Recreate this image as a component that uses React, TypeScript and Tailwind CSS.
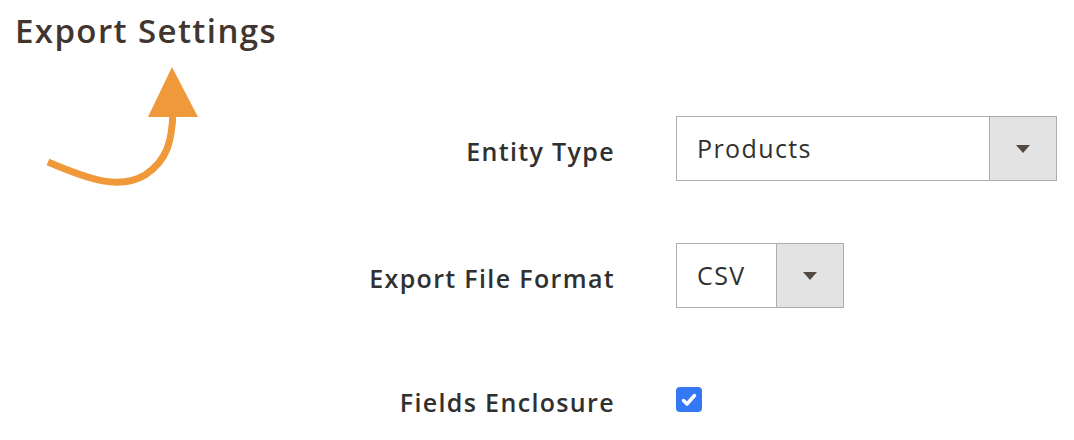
import React from "react";

function Caret() {
  return (
    <svg width="14" height="8" viewBox="0 0 14 8" aria-hidden>
      <path d="M0 0h14L7 8z" fill="#514943" />
    </svg>
  );
}

function SelectBox({ value, width }: { value: string; width: string }) {
  return (
    <div className={`flex h-[65px] ${width} border border-[#adadad] bg-white`}>
      <div className="flex flex-1 items-center pl-[20px] text-[25px] tracking-[1.4px] text-[#303030]">{value}</div>
      <div className="flex w-[67px] items-center justify-center border-l border-[#adadad] bg-[#e3e3e3]">
        <Caret />
      </div>
    </div>
  );
}

function Row({ label, children, className }: { label: string; children: React.ReactNode; className?: string }) {
  return (
    <div className={`flex items-center ${className ?? ""}`}>
      <div className="w-[615px] pt-[6px] text-right text-[25px] font-semibold tracking-[1.35px] text-[#303030]">{label}</div>
      <div className="ml-[61px]">{children}</div>
    </div>
  );
}

export default function App() {
  return (
    <div
      className="relative h-[440px] w-[1074px] overflow-hidden bg-white"
      style={{ fontFamily: '"Open Sans", "Liberation Sans", sans-serif' }}
    >
      <h1 className="pl-[15px] pt-[9px] text-[33px] font-semibold leading-[44px] tracking-[1.4px] text-[#41362f]">
        Export Settings
      </h1>

      <svg className="absolute left-0 top-0" width="220" height="200" viewBox="0 0 220 200" aria-hidden>
        <path
          d="M48 162 C 90 180, 120 190, 145 175 C 168 160, 172 140, 173 112"
          fill="none"
          stroke="#f0993a"
          strokeWidth="7"
        />
        <path d="M172 67 L198 117 L148 117 Z" fill="#f0993a" />
      </svg>

      <div className="flex flex-col">
        <Row label="Entity Type" className="mt-[63px]">
          <SelectBox value="Products" width="w-[381px]" />
        </Row>
        <Row label="Export File Format" className="mt-[62px]">
          <SelectBox value="CSV" width="w-[168px]" />
        </Row>
        <Row label="Fields Enclosure" className="mt-[70px]">
          <div className="flex h-[25px] w-[26px] items-center justify-center rounded-[4px] bg-[#3478f6]">
            <svg width="16" height="14" viewBox="0 0 16 14" aria-hidden>
              <path d="M2.5 7.5 L6 11 L13.5 2.5" fill="none" stroke="white" strokeWidth="3.5" strokeLinecap="round" strokeLinejoin="round" />
            </svg>
          </div>
        </Row>
      </div>
    </div>
  );
}
